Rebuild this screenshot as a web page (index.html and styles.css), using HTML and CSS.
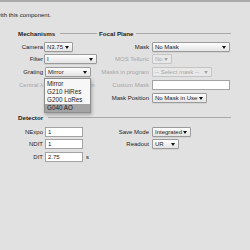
FILE: index.html
```html
<!DOCTYPE html>
<html lang="en">
<head>
  <meta charset="UTF-8" />
  <meta name="viewport" content="width=device-width, initial-scale=1.0" />
  <title>Instrument Configuration</title>
  <link rel="stylesheet" href="styles.css">
</head>
<body>
  <div class="panel">
    <div class="intro"><span>Set the instrument configuration associated with this component.</span></div>

    <div class="grid mech">
      <div class="heading indent"><span>Mechanisms</span><i class="rule rule-mech"></i></div>
      <div class="heading"><span>Focal Plane</span><i class="rule rule-focal"></i></div>

      <label class="lbl">Camera</label>
      <div class="cell"><div class="select w-camera"><span>N3.75</span><b class="arrow"></b></div></div>
      <label class="lbl lbl-r">Mask</label>
      <div class="cell cell-r"><div class="select w-mask"><span>No Mask</span><b class="arrow"></b></div></div>

      <label class="lbl">Filter</label>
      <div class="cell"><div class="select w-filter"><span>I</span><b class="arrow"></b></div></div>
      <label class="lbl lbl-r off">MOS Telluric</label>
      <div class="cell cell-r"><div class="select off w-tell"><span>No</span><b class="arrow"></b></div></div>

      <label class="lbl">Grating</label>
      <div class="cell grating">
        <div class="select w-grating"><span>Mirror</span><b class="arrow"></b></div>
        <div class="popup">
          <div>Mirror</div>
          <div>G210 HiRes</div>
          <div>G200 LoRes</div>
          <div class="on">G040 AO</div>
        </div>
      </div>
      <label class="lbl lbl-r off">Masks in program</label>
      <div class="cell cell-r"><div class="select off w-prog"><span>-- Select mask --</span><b class="arrow"></b></div></div>

      <label class="lbl off">Central λ</label>
      <div class="cell unit-row"><input class="field off" type="text" value="2.20" disabled><span class="unit off">μm</span></div>
      <label class="lbl lbl-r off">Custom Mask</label>
      <div class="cell cell-r"><input class="field w-custom" type="text" value=""></div>

      <span></span>
      <span></span>
      <label class="lbl lbl-r">Mask Position</label>
      <div class="cell cell-r"><div class="select w-pos"><span>No Mask in Use</span><b class="arrow"></b></div></div>
    </div>

    <div class="grid det">
      <div class="heading wide indent"><span>Detector</span><i class="rule rule-det"></i></div>

      <label class="lbl">NExpo</label>
      <div class="cell"><input class="field" type="text" value="1"></div>
      <label class="lbl lbl-r">Save Mode</label>
      <div class="cell cell-r"><div class="select w-save"><span>Integrated</span><b class="arrow"></b></div></div>

      <label class="lbl">NDIT</label>
      <div class="cell"><input class="field" type="text" value="1"></div>
      <label class="lbl lbl-r">Readout</label>
      <div class="cell cell-r"><div class="select w-readout"><span>UR</span><b class="arrow"></b></div></div>

      <label class="lbl">DIT</label>
      <div class="cell unit-row"><input class="field" type="text" value="2.75"><span class="unit">s</span></div>
    </div>
  </div>
</body>
</html>
```

FILE: styles.css
```css
body {
  margin: 0;
  background-color: #e1e1e1;
  font-family: "Liberation Sans", Arial, sans-serif;
  font-size: 6px;
  color: #1c1c1c;
  overflow: hidden;
}

.panel {
  border-top: 2px solid #ababab;
  height: 248px;
}

.intro {
  display: flex;
  justify-content: flex-end;
  width: 51px;
  padding-top: 9px;
  line-height: 8px;
  white-space: nowrap;
}

.grid {
  display: grid;
  grid-template-columns: 44px 55px 52px 80px;
}

.mech {
  margin-top: 10px;
  grid-template-rows: 13px 12px 13px 13px 13px 13px;
}

.det {
  margin-top: 7px;
  grid-template-rows: 14px 12px 13px 13px;
}

.heading {
  grid-column: span 2;
  display: flex;
  align-items: center;
  height: 8px;
  font-weight: bold;
  font-size: 6.2px;
  white-space: nowrap;
}

.heading.wide {
  grid-column: span 4;
}

.indent {
  padding-left: 18px;
}

.rule {
  flex: 1;
  height: 0;
  border-top: 1px solid #a9a9a9;
}

.rule-mech {
  margin: 0 2px 0 5px;
}

.rule-focal {
  margin-left: 3px;
}

.rule-det {
  margin-left: 5px;
}

.lbl {
  text-align: right;
  padding-right: 1px;
  line-height: 10px;
  white-space: nowrap;
}

.lbl-r {
  padding-right: 2px;
}

.off {
  color: #a6a6a6;
}

.cell {
  display: flex;
  align-items: flex-start;
}

.cell-r {
  padding-left: 1px;
}

.select {
  display: flex;
  align-items: center;
  justify-content: space-between;
  box-sizing: border-box;
  height: 10px;
  padding: 0 3px 0 2px;
  border: 1px solid #9b9b9b;
  border-radius: 1px;
  background: linear-gradient(#fefefe, #e4e4e4);
  box-shadow: 0 1px 0 rgba(0, 0, 0, 0.06);
  line-height: 8px;
  white-space: nowrap;
}

.select.off {
  border-color: #c4c4c4;
  background: #e8e8e8;
  box-shadow: none;
}

.arrow {
  width: 0;
  height: 0;
  border-left: 2px solid transparent;
  border-right: 2px solid transparent;
  border-top: 3px solid #111;
}

.off .arrow {
  border-top-color: #a6a6a6;
}

.field {
  box-sizing: border-box;
  width: 38px;
  height: 10px;
  margin: 0 0 0 1px;
  padding: 0 2px;
  border: 1px solid #a3a3a3;
  background-color: #fff;
  font: inherit;
  color: #1c1c1c;
  outline: none;
}

.field.off {
  border-color: #c4c4c4;
  background-color: #e8e8e8;
  color: #a6a6a6;
}

.unit {
  margin-left: 3px;
  line-height: 10px;
}

.w-camera { width: 29px; }
.w-filter { width: 53px; }
.w-grating { width: 46px; margin-left: 1px; }
.w-mask { width: 78px; }
.w-tell { width: 20px; }
.w-prog { width: 60px; }
.w-custom { width: 78px; margin-left: 0; }
.w-pos { width: 55px; }
.w-save { width: 39px; }
.w-readout { width: 27px; }

.grating {
  position: relative;
}

.popup {
  position: absolute;
  top: 11px;
  left: 0;
  z-index: 2;
  box-sizing: border-box;
  width: 47px;
  padding-top: 1px;
  border: 1px solid #8e8e8e;
  background-color: #f7f7f7;
  box-shadow: 1px 2px 3px rgba(0, 0, 0, 0.25);
  font-size: 6.3px;
}

.popup div {
  height: 8px;
  line-height: 8px;
  padding-left: 2px;
}

.popup .on {
  background-color: #a4a4a4;
}
```
